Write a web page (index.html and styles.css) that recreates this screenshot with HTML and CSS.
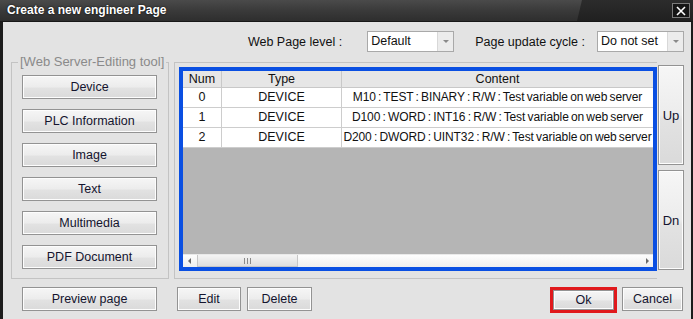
FILE: index.html
```html
<!DOCTYPE html>
<html lang="en">
<head>
    <meta charset="UTF-8">
    <title>Create a new engineer Page</title>
    <link rel="stylesheet" href="styles.css">
</head>
<body>
    <div class="window">
        <!-- Title Bar -->
        <div class="titlebar">
            <span class="title">Create a new engineer Page</span>
            <span class="close-btn">
                <svg width="12" height="10" viewBox="0 0 12 10">
                    <path d="M2 1 L10 9 M10 1 L2 9" stroke="#fff" stroke-width="1.6"/>
                </svg>
            </span>
        </div>

        <div class="client">
            <!-- Page settings row -->
            <div class="top-row">
                <span class="field-label">Web Page level :</span>
                <span class="combo combo-level">
                    <span class="combo-text">Default</span>
                    <span class="combo-arrow"></span>
                </span>
                <span class="field-label label-cycle">Page update cycle :</span>
                <span class="combo combo-cycle">
                    <span class="combo-text">Do not set</span>
                    <span class="combo-arrow"></span>
                </span>
            </div>

            <div class="main-row">
                <!-- Editing tools group -->
                <div class="tools">
                    <span class="group-title">[Web Server-Editing tool]</span>
                    <button class="btn tool-btn">Device</button>
                    <button class="btn tool-btn">PLC Information</button>
                    <button class="btn tool-btn">Image</button>
                    <button class="btn tool-btn">Text</button>
                    <button class="btn tool-btn">Multimedia</button>
                    <button class="btn tool-btn">PDF Document</button>
                </div>

                <!-- Variable list -->
                <div class="list-frame">
                    <div class="list">
                        <div class="grid">
                            <div class="row head">
                                <div class="cell c-num">Num</div>
                                <div class="cell c-type">Type</div>
                                <div class="cell c-content">Content</div>
                            </div>
                            <div class="row">
                                <div class="cell c-num">0</div>
                                <div class="cell c-type">DEVICE</div>
                                <div class="cell c-content">M10 : TEST : BINARY : R/W : Test variable on web server</div>
                            </div>
                            <div class="row">
                                <div class="cell c-num">1</div>
                                <div class="cell c-type">DEVICE</div>
                                <div class="cell c-content">D100 : WORD : INT16 : R/W : Test variable on web server</div>
                            </div>
                            <div class="row">
                                <div class="cell c-num">2</div>
                                <div class="cell c-type">DEVICE</div>
                                <div class="cell c-content">D200 : DWORD : UINT32 : R/W : Test variable on web server</div>
                            </div>
                        </div>
                        <div class="hscroll">
                            <span class="arrow-left"></span>
                            <span class="thumb"><span class="grip"></span></span>
                            <span class="track"></span>
                            <span class="arrow-right"></span>
                        </div>
                    </div>
                </div>

                <!-- Order buttons -->
                <div class="updown">
                    <button class="btn move-btn">Up</button>
                    <button class="btn move-btn">Dn</button>
                </div>
            </div>

            <!-- Bottom buttons -->
            <div class="bottom-row">
                <button class="btn preview-btn">Preview page</button>
                <button class="btn edit-btn">Edit</button>
                <button class="btn delete-btn">Delete</button>
                <span class="ok-wrap"><button class="btn ok-btn">Ok</button></span>
                <button class="btn cancel-btn">Cancel</button>
            </div>
        </div>
    </div>
</body>
</html>
```

FILE: styles.css
```css
/* Basic Reset */
* {
    margin: 0;
    padding: 0;
    box-sizing: border-box;
    font-family: 'Liberation Sans', Arial, sans-serif;
}

body {
    width: 693px;
    height: 319px;
    overflow: hidden;
    background-color: #1c1c1c;
}

/* Window frame */
.window {
    width: 693px;
    height: 319px;
    display: flex;
    flex-direction: column;
    background-color: #1c1c1c;
}

/* Title Bar */
.titlebar {
    position: relative;
    height: 22px;
    flex: none;
    display: flex;
    align-items: center;
    padding: 0 3px 1px 7px;
    background: linear-gradient(#4a4a4a, #3a3a3a 50%, #2e2e2e);
    border-bottom: 1px solid #181818;
}
.titlebar::after {
    content: "";
    position: absolute;
    top: 0;
    right: 0;
    width: 116px;
    height: 21px;
    background: linear-gradient(#2c2c2c, #202020);
    clip-path: polygon(5px 0, 100% 0, 100% 100%, 0 100%);
}
.title {
    color: #fff;
    font-size: 12px;
    font-weight: bold;
    text-shadow: 0 0 2px #000;
}
.close-btn {
    position: relative;
    z-index: 1;
    margin-left: auto;
    margin-top: 1px;
    width: 18px;
    height: 15px;
    border: 1px solid #7a7a7a;
    background-color: #151515;
    display: flex;
    align-items: center;
    justify-content: center;
}

/* Client Area */
.client {
    flex: 1;
    margin: 0 2px 0 3px;
    padding: 9px 7px 0 8px;
    background-color: #e3e3e3;
    color: #111;
    font-size: 12px;
}

.top-row {
    height: 21px;
    display: flex;
    justify-content: flex-end;
    align-items: center;
}
.field-label {
    font-size: 12.5px;
    color: #111;
}
.combo {
    width: 87px;
    height: 21px;
    margin-left: 25px;
    display: flex;
    background-color: #fff;
    border: 1px solid #a9a9a9;
}
.label-cycle {
    margin-left: 21px;
}
.combo-cycle {
    margin-left: 12px;
}
.combo-text {
    flex: 1;
    padding: 2px 0 0 3px;
    font-size: 12.5px;
}
.combo-arrow {
    width: 16px;
    border-left: 1px solid #d8d8d8;
    background-color: #ececec;
    position: relative;
}
.combo-arrow::after {
    content: "";
    position: absolute;
    left: 5px;
    top: 8px;
    border-left: 3px solid transparent;
    border-right: 3px solid transparent;
    border-top: 3px solid #8a8a8a;
}

/* Main row */
.main-row {
    margin-top: 10px;
    height: 217px;
    display: flex;
}

/* Tools group box */
.tools {
    position: relative;
    width: 158px;
    border: 1px solid #c3c3c3;
    padding: 12px 10px 0 10px;
    display: flex;
    flex-direction: column;
    gap: 10px;
}
.group-title {
    position: absolute;
    top: -9px;
    left: 6px;
    padding: 0 2px;
    background-color: #e3e3e3;
    color: #8a8a8a;
    font-size: 13px;
    white-space: nowrap;
}

/* Generic push button */
.btn {
    height: 24px;
    border: 1px solid #939393;
    box-shadow: inset 0 0 0 1px #fdfdfd;
    background: linear-gradient(#f6f6f6, #ececec 50%, #e2e2e2 55%, #dadada);
    color: #14142e;
    font-size: 12.5px;
    cursor: pointer;
}
.tool-btn {
    width: 135px;
}

/* List frame */
.list-frame {
    width: 483px;
    margin-left: 5px;
    border: 1px solid #c3c3c3;
    border-right: none;
    padding: 4px 0 7px 4px;
}
.list {
    height: 100%;
    border: 4px solid #0a4fe2;
    background-color: #b5b5b5;
    display: flex;
    flex-direction: column;
}
.grid {
    flex: 1;
}
.row {
    display: flex;
    height: 20px;
    background-color: #fff;
    border-bottom: 1px solid #cdcdcd;
}
.row.head {
    height: 17px;
    background-color: #e6e6e6;
    border-bottom: 1px solid #c8c8c8;
}
.cell {
    text-align: center;
    font-size: 12.5px;
    line-height: 19px;
    white-space: nowrap;
    overflow: hidden;
    border-right: 1px solid #cdcdcd;
}
.head .cell {
    line-height: 16px;
    border-right-color: #c8c8c8;
}
.c-num {
    width: 39px;
}
.c-type {
    width: 120px;
}
.c-content {
    flex: 1;
    border-right: none;
    font-size: 12px;
    letter-spacing: -0.1px;
    word-spacing: -1px;
}
.head .c-content {
    font-size: 12.5px;
    letter-spacing: 0;
}

/* Horizontal scrollbar */
.hscroll {
    height: 13px;
    display: flex;
    background: linear-gradient(#fdfdfd, #eeeeee);
    border-top: 1px solid #e9e9e9;
}
.arrow-left,
.arrow-right {
    width: 14px;
    position: relative;
}
.arrow-left::after {
    content: "";
    position: absolute;
    left: 5px;
    top: 3px;
    border-top: 3px solid transparent;
    border-bottom: 3px solid transparent;
    border-right: 3px solid #6a6a6a;
}
.arrow-right {
    width: 9px;
}
.arrow-right::after {
    content: "";
    position: absolute;
    left: 2px;
    top: 3px;
    border-top: 3px solid transparent;
    border-bottom: 3px solid transparent;
    border-left: 3px solid #6a6a6a;
}
.thumb {
    width: 101px;
    border: 1px solid #c6c6c6;
    border-top: none;
    background: linear-gradient(#f4f4f4, #dedede);
    display: flex;
    justify-content: center;
    align-items: center;
}
.grip {
    width: 7px;
    height: 6px;
    border-left: 1px solid #8a8a8a;
    border-right: 1px solid #8a8a8a;
    position: relative;
}
.grip::after {
    content: "";
    position: absolute;
    left: 2px;
    top: 0;
    width: 1px;
    height: 6px;
    background-color: #8a8a8a;
}
.track {
    flex: 1;
}

/* Up / Down buttons */
.updown {
    margin: 3px 0 0 1px;
    display: flex;
    flex-direction: column;
    gap: 5px;
}
.move-btn {
    width: 26px;
    height: 100px;
    font-size: 13px;
}

/* Bottom buttons */
.bottom-row {
    margin-top: 8px;
    display: flex;
    align-items: flex-start;
}
.preview-btn {
    width: 135px;
    margin-left: 11px;
}
.edit-btn {
    width: 64px;
    margin-left: 20px;
}
.delete-btn {
    width: 65px;
    margin-left: 6px;
}
.ok-wrap {
    width: 67px;
    height: 26px;
    margin-left: 238px;
    border: 3px solid #e0191c;
    display: flex;
}
.ok-btn {
    flex: 1;
    height: 20px;
}
.cancel-btn {
    width: 61px;
    margin-left: 5px;
}
```
